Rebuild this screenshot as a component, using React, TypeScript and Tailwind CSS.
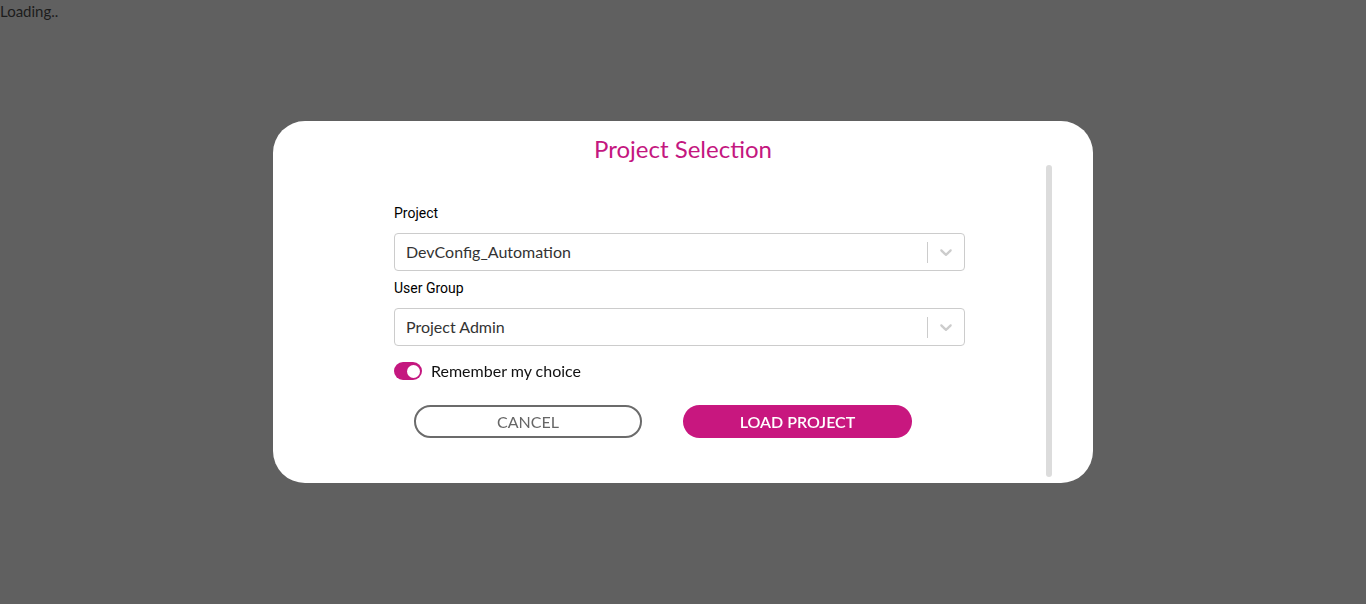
import React from "react";

function Chevron() {
  return (
    <svg width="20" height="20" viewBox="0 0 20 20" className="text-[#cccccc]" fill="currentColor">
      <path d="M4.516 7.548c0.436-0.446 1.043-0.481 1.576 0l3.908 3.747 3.908-3.747c0.533-0.481 1.141-0.446 1.574 0 0.436 0.445 0.408 1.197 0 1.615-0.406 0.418-4.695 4.502-4.695 4.502-0.217 0.223-0.502 0.335-0.787 0.335s-0.57-0.112-0.789-0.335c0 0-4.287-4.084-4.695-4.502s-0.436-1.17 0-1.615z" />
    </svg>
  );
}

function Select({ value }: { value: string }) {
  return (
    <div className="flex h-[38px] w-[571px] items-center rounded-[4px] border border-[#cccccc] bg-white">
      <div className="flex-1 pl-[11px] text-[16px] text-[#333333] [font-family:Lato,sans-serif]">{value}</div>
      <div className="h-[21px] w-px bg-[#cccccc]" />
      <div className="flex w-[36px] items-center justify-center">
        <Chevron />
      </div>
    </div>
  );
}

export default function App() {
  return (
    <div className="min-h-[604px] bg-[#606060] [font-family:Lato,sans-serif]">
      <div className="text-[15px] leading-[22px] text-[#1c1c1c]">Loading..</div>
      <div className="fixed inset-0 flex items-center justify-center">
        <div className="flex h-[362px] w-[820px] flex-col rounded-[32px] bg-white">
          <div className="pt-[12px] text-center text-[24px] leading-[32px] text-[#c4177f]">Project Selection</div>
          <div className="flex flex-1 pb-[6px]">
            <div className="flex flex-1 flex-col pl-[121px] pt-[38px]">
              <div className="mb-[10px] h-[20px] text-[14px] font-normal leading-[20px] text-[#000000] [font-family:Roboto,sans-serif]">Project</div>
              <Select value="DevConfig_Automation" />
              <div className="mb-[10px] mt-[7px] h-[20px] text-[14px] font-normal leading-[20px] text-[#000000] [font-family:Roboto,sans-serif]">User Group</div>
              <Select value="Project Admin" />
              <div className="mt-[15px] flex items-center gap-[9px]">
                <div className="flex h-[18px] w-[28px] items-center justify-end rounded-full bg-[#c4177f] pr-[2px]">
                  <div className="h-[13px] w-[13px] rounded-full bg-white" />
                </div>
                <div className="text-[16px] leading-[20px] text-[#111111]">Remember my choice</div>
              </div>
              <div className="mt-[24px] flex gap-[41px] pl-[20px]">
                <button className="flex h-[33px] w-[228px] items-center justify-center rounded-full border-2 border-[#6b6b6b] bg-white text-[16px] text-[#666666]">CANCEL</button>
                <button className="flex h-[33px] w-[229px] items-center justify-center rounded-full bg-[#c8177f] text-[16px] font-semibold text-white">LOAD PROJECT</button>
              </div>
            </div>
            <div className="mr-[41px] w-[6px] rounded-full bg-[#dcdcdc]" />
          </div>
        </div>
      </div>
    </div>
  );
}
